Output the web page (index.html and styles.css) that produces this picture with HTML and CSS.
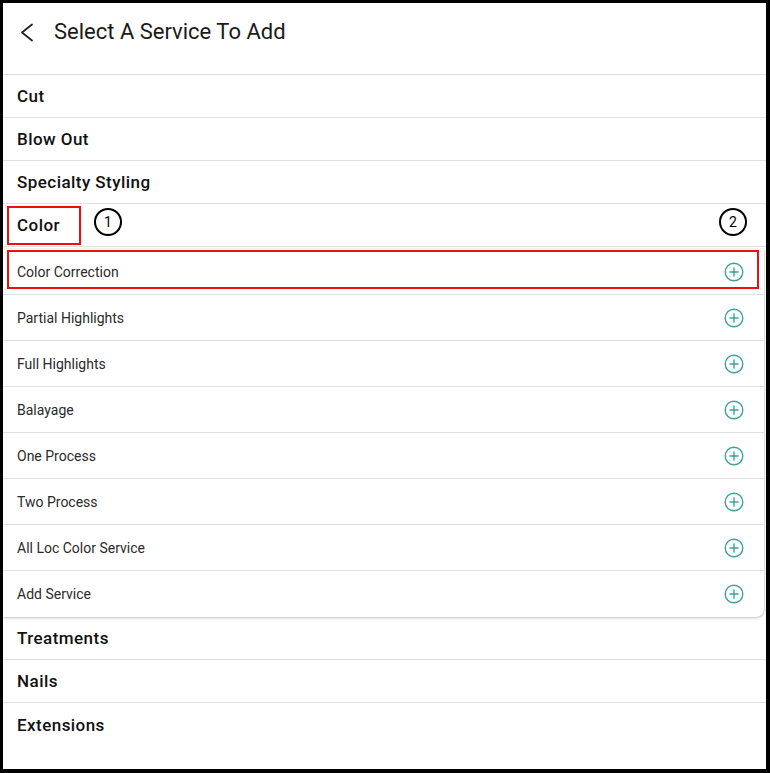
FILE: index.html
```html
<!DOCTYPE html>
<html>
<head>
<meta charset="utf-8">
<link rel="stylesheet" href="styles.css">
</head>
<body>
<div class="frame">
  <header class="header">
    <svg class="back" width="14" height="19" viewBox="0 0 14 19"><path d="M12 1.5 L2 9.5 L12 17.5" fill="none" stroke="#222" stroke-width="1.8" stroke-linecap="round" stroke-linejoin="round"/></svg>
    <h1 class="title">Select A Service To Add</h1>
  </header>
  <div class="cat">Cut</div>
  <div class="cat">Blow Out</div>
  <div class="cat">Specialty Styling</div>
  <div class="cat cat-open">Color
    <span class="mark mark-color"></span>
    <span class="num num-1">1</span>
    <span class="num num-2">2</span>
  </div>
  <div class="card">
    <div class="sub">Color Correction<svg class="plus" viewBox="0 0 20 20"><circle cx="10" cy="10" r="8.8"/><path d="M10 5.5V14.5M5.5 10H14.5"/></svg><span class="mark mark-sub"></span></div>
    <div class="sub">Partial Highlights<svg class="plus" viewBox="0 0 20 20"><circle cx="10" cy="10" r="8.8"/><path d="M10 5.5V14.5M5.5 10H14.5"/></svg></div>
    <div class="sub">Full Highlights<svg class="plus" viewBox="0 0 20 20"><circle cx="10" cy="10" r="8.8"/><path d="M10 5.5V14.5M5.5 10H14.5"/></svg></div>
    <div class="sub">Balayage<svg class="plus" viewBox="0 0 20 20"><circle cx="10" cy="10" r="8.8"/><path d="M10 5.5V14.5M5.5 10H14.5"/></svg></div>
    <div class="sub">One Process<svg class="plus" viewBox="0 0 20 20"><circle cx="10" cy="10" r="8.8"/><path d="M10 5.5V14.5M5.5 10H14.5"/></svg></div>
    <div class="sub">Two Process<svg class="plus" viewBox="0 0 20 20"><circle cx="10" cy="10" r="8.8"/><path d="M10 5.5V14.5M5.5 10H14.5"/></svg></div>
    <div class="sub">All Loc Color Service<svg class="plus" viewBox="0 0 20 20"><circle cx="10" cy="10" r="8.8"/><path d="M10 5.5V14.5M5.5 10H14.5"/></svg></div>
    <div class="sub">Add Service<svg class="plus" viewBox="0 0 20 20"><circle cx="10" cy="10" r="8.8"/><path d="M10 5.5V14.5M5.5 10H14.5"/></svg></div>
  </div>
  <div class="cat">Treatments</div>
  <div class="cat">Nails</div>
  <div class="cat cat-last">Extensions</div>
</div>
</body>
</html>
```

FILE: styles.css
```css
* { box-sizing: border-box; }
html, body { margin: 0; padding: 0; background: #000; }
body { font-family: Roboto, "Noto Sans", sans-serif; color: #1c1c1c; }

.frame {
  width: 770px;
  height: 773px;
  background: #fff;
  border-style: solid;
  border-color: #000;
  border-width: 3px 4px 4px 3px;
  overflow: hidden;
  position: relative;
}

.header {
  height: 72px;
  border-bottom: 1px solid #dedede;
  display: flex;
  align-items: flex-start;
  padding: 15px 0 0 17px;
}
.back { margin-top: 5px; width: 14px; height: 19px; flex: none; }
.title {
  margin: 0 0 0 20px;
  font-size: 22px;
  line-height: 28px;
  font-weight: 400;
  color: #1a1a1a;
}

.cat {
  height: 43px;
  border-bottom: 1px solid #e0e0e0;
  display: flex;
  align-items: center;
  padding-left: 14px;
  font-size: 17px;
  font-weight: 500;
  letter-spacing: 0.45px;
  color: #111;
  position: relative;
}
.cat-last { border-bottom: none; }

.card {
  margin: 2px 2px 0 0;
  border-radius: 0 0 8px 0;
  box-shadow: 0 1px 3px rgba(0,0,0,0.22), 1px 0 2px rgba(0,0,0,0.08);
  background: #fff;
  position: relative;
}
.sub {
  height: 46px;
  border-bottom: 1px solid #e0e0e0;
  display: flex;
  align-items: center;
  justify-content: space-between;
  padding: 0 20px 0 14px;
  font-size: 14px;
  color: #2a2a2a;
  position: relative;
}
.sub:last-child { border-bottom: none; }

.plus {
  width: 20px;
  height: 20px;
  fill: none;
  stroke: #3aa39c;
  stroke-width: 1.4;
}

.mark {
  position: absolute;
  border: 2px solid #e81010;
  pointer-events: none;
}
.mark-color { left: 4px; top: 2px; width: 74px; height: 39px; }
.mark-sub { left: 4px; top: 1px; width: 752px; height: 39px; }

.num {
  position: absolute;
  top: 4px;
  width: 28px;
  height: 28px;
  border: 2px solid #000;
  border-radius: 50%;
  display: flex;
  align-items: center;
  justify-content: center;
  font-size: 14px;
  font-weight: 400;
  letter-spacing: 0;
  color: #000;
}
.num-1 { left: 91px; }
.num-2 { left: 716px; }
```
